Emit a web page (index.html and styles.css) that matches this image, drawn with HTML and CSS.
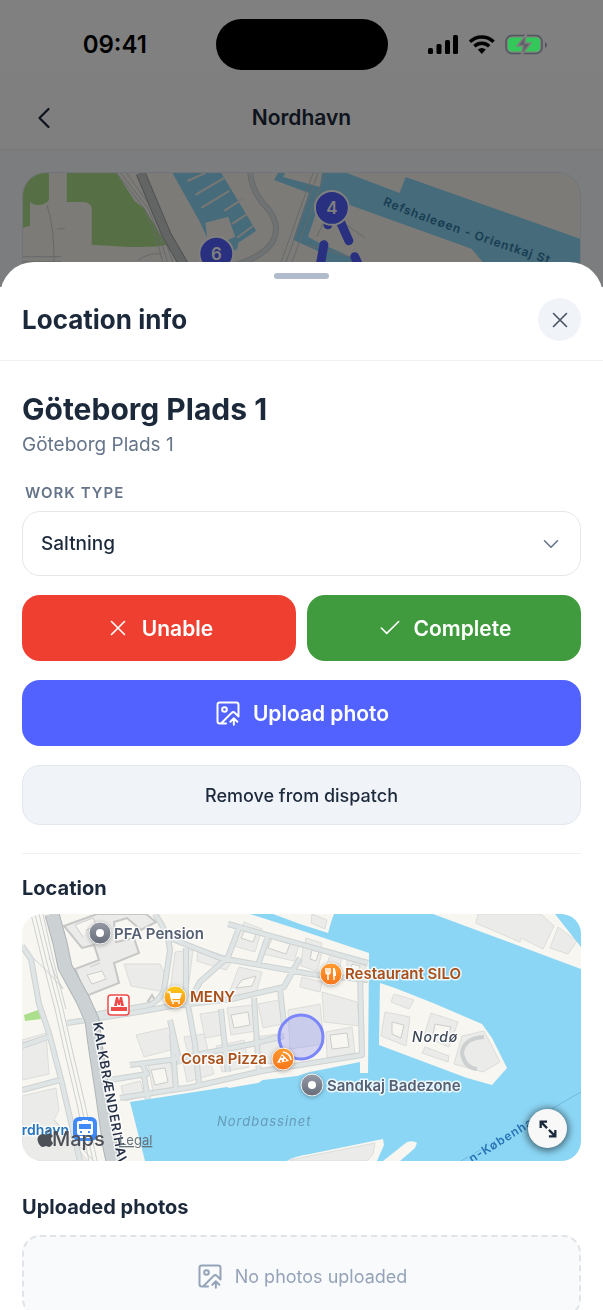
FILE: index.html
```html
<!DOCTYPE html>
<html lang="en">

<head>
    <meta charset="UTF-8">
    <title>Nordhavn</title>
    <meta name="viewport" content="width=device-width, initial-scale=1">
    <link rel="stylesheet" href="styles.css">
</head>

<body>
    <!-- icons shared by several controls -->
    <svg class="sprite" aria-hidden="true">
        <symbol id="icon-x" viewBox="0 0 24 24">
            <path d="M18 6 6 18M6 6l12 12" />
        </symbol>
        <symbol id="icon-photo" viewBox="0 0 24 24">
            <path d="M10.3 21H5a2 2 0 0 1-2-2V5a2 2 0 0 1 2-2h14a2 2 0 0 1 2 2v10l-3.1-3.1a2 2 0 0 0-2.8 0L6 21" />
            <path d="m14 19.5 3-3 3 3M17 22v-5.5" />
            <circle cx="9" cy="9" r="2" />
        </symbol>
    </svg>

    <div class="app">
        <div class="status-bar">
            <span class="time">09:41</span>
            <span class="island"></span>
            <svg class="status-icons" viewBox="0 0 120 22" width="120" height="22">
                <rect x="0" y="14" width="5" height="6" rx="1.5" />
                <rect x="8.5" y="10" width="5" height="10" rx="1.5" />
                <rect x="17" y="6" width="5" height="14" rx="1.5" />
                <rect x="25" y="1" width="5" height="19" rx="1.5" />
                <g class="wifi">
                    <path d="M42 7.8a17 17 0 0 1 23.6 0" />
                    <path d="M46.4 12.2a10.7 10.7 0 0 1 14.8 0" />
                </g>
                <path d="M49.8 15.5a5.8 5.8 0 0 1 8 0L53.800 20Z" />
                <rect class="battery-frame" x="78" y="1.5" width="36" height="18" rx="6" />
                <path class="battery-tip" d="M117 8q2 1 2 3t-2 3Z" />
                <rect class="battery-level" x="80" y="3.5" width="32" height="14" rx="4" />
                <path class="battery-bolt" d="M98.5 0 89 12h6L93 22l10-13h-6Z" />
            </svg>
        </div>

        <header class="nav-bar">
            <button class="back" type="button" aria-label="Back">
                <svg class="icon icon-lg" viewBox="0 0 24 24"><path d="m15 18-6-6 6-6" /></svg>
            </button>
            <h1>Nordhavn</h1>
        </header>

        <main class="route">
            <svg class="map route-map" viewBox="0 0 559 247" preserveAspectRatio="xMidYMin slice">
                <rect class="land" width="559" height="247" />
                <path class="park" d="M0 0H26V27Q22 33 12 32L7 29V53L0 55ZM44 0H94L112 28 122 36Q132 52 144 72Q135 75 102 74L69 72V35Q67 29 60 29H44Z" />
                <g class="water">
                    <path d="M150 0H199L234 58 216 70 215 76 208 80V110H186V68L178 50Z" />
                    <path d="M256 0 252 7 287 20 271 67 300 80V90H330L335 87 295 69 286 64 300 22 450 76 462 90H559V66L384 4 378 20 325 0H300L298 14 261 4 263 0Z" />
                </g>
                <path class="land" d="M183 50 206 44 213 64 195 72 185 67Z" />
                <g class="pier">
                    <path d="m165 8 18-8M173 22l29-17M179 35l28-17M202 38l20-13M210 51l15-10M215 65l16-12" />
                </g>
                <g class="rail">
                    <path d="M94 0 122 36 134 66 143 100M98 0 126 36 138 66 148 100M104 0 131 38 142 66 154 100" />
                    <path d="M291 0 257 95M296 0 262 95M303 0 268 95M0 84H38M0 89H38M24 32Q32 55 31 95M34 56h8M115 88q10-8 24-7" />
                    <path d="M300 35 343 65M310 30 295 64M285 72l50 14" />
                </g>
                <path class="road-edge road-main" d="M118 0 144 62 166 100" />
                <path class="road-main" d="M118 0 144 62 166 100" />
                <path class="road-edge" d="M228 0Q230 20 245 35 258 50 252 66 245 82 215 92" />
                <path class="road" d="M228 0Q230 20 245 35 258 50 252 66 245 82 215 92" />
                <path class="dispatch-line" d="M306 50v2M302 72l-5 28M319 50l8 18M333 84l8 18" />
                <g class="stop">
                    <circle cx="310" cy="35" r="17" />
                    <text x="310" y="41">4</text>
                    <circle cx="194" cy="81" r="17" />
                    <text x="194" y="87">6</text>
                </g>
                <path id="ferry" class="guide" d="M361 32Q430 60 560 102" />
                <text class="ferry-label"><textPath href="#ferry">Refshaleøen - Orientkaj St</textPath></text>
            </svg>
        </main>
        <div class="dim"></div>
    </div>

    <section class="sheet" aria-labelledby="sheet-title">
        <header class="sheet-header">
            <span class="handle"></span>
            <h2 id="sheet-title">Location info</h2>
            <button class="close" type="button" aria-label="Close">
                <svg class="icon"><use href="#icon-x" /></svg>
            </button>
        </header>

        <div class="sheet-body">
            <h3 class="place">Göteborg Plads 1</h3>
            <p class="address">Göteborg Plads 1</p>

            <label class="field-label" for="workType">Work type</label>
            <div class="select">
                <select id="workType">
                    <option>Saltning</option>
                </select>
                <svg class="icon" viewBox="0 0 24 24"><path d="m6 9 6 6 6-6" /></svg>
            </div>

            <div class="actions">
                <button class="btn btn-red" type="button">
                    <svg class="icon"><use href="#icon-x" /></svg>
                    Unable
                </button>
                <button class="btn btn-green" type="button">
                    <svg class="icon" viewBox="0 0 24 24"><path d="M20 6 9 17l-5-5" /></svg>
                    Complete
                </button>
                <button class="btn btn-blue" type="button">
                    <svg class="icon icon-photo"><use href="#icon-photo" /></svg>
                    Upload photo
                </button>
                <button class="btn btn-plain" type="button">Remove from dispatch</button>
            </div>

            <hr>

            <h4>Location</h4>
            <div class="location">
                <svg class="map" viewBox="0 0 559 247" preserveAspectRatio="xMidYMid slice">
                    <defs>
                        <linearGradient id="grey-pin" x2="0" y2="1">
                            <stop stop-color="#969ba6" />
                            <stop offset="1" stop-color="#666d79" />
                        </linearGradient>
                        <linearGradient id="yellow-pin" x2="0" y2="1">
                            <stop stop-color="#fbc916" />
                            <stop offset="1" stop-color="#fb8b1e" />
                        </linearGradient>
                        <linearGradient id="orange-pin" x2="0" y2="1">
                            <stop stop-color="#ff9a2f" />
                            <stop offset="1" stop-color="#f9761a" />
                        </linearGradient>
                    </defs>

                    <rect class="land" width="559" height="247" />
                    <path class="park" d="M2 101 16 96 19 105 3 107Z" />
                    <g class="block">
                        <path d="M0 126 24 119 27 160 0 166ZM0 182 34 174 37 196 32 206 66 247H0Z" />
                        <path d="M102 50 138 50 143 60V78L109 72ZM153 38 171 36 165 83 148 78ZM176 33 212 45 204 56 175 47Z" />
                        <path d="M222 8 240 15 233 38 212 32ZM247 20 278 28 272 47 241 40ZM217 53 240 58 234 80 205 84ZM284 24 300 29 295 54 279 48Z" />
                        <path d="M205 94 230 91 234 117 209 121ZM236 90 257 86 261 110 241 114ZM178 100 198 97 201 121 183 124Z" />
                        <path d="M114 121 150 113 156 134 122 143ZM162 123 182 120 188 144 168 148ZM194 132 222 126 227 153 200 158ZM232 123 257 120 259 148 235 151Z" />
                        <path d="M99 172 118 167 123 182 103 187ZM126 150 148 146 153 174 131 178ZM161 148 187 143 192 160 165 168Z" />
                        <path d="M300 78 335 88 338 112 302 108ZM304 118 330 113 333 139 305 144ZM266 96 298 90 302 130 268 135Z" />
                        <path d="M281 33 300 38 295 57 279 52ZM309 38 320 41 316 63 302 59ZM325 46 344 52 342 67 325 62Z" />
                        <path d="M280 63 300 68 298 78 278 73ZM290 0 305 6 303 15 289 9Z" />
                        <path d="M456 0H519L532 12 521 35 499 24 498 28 454 9ZM536 13 555 27 546 40 528 34Z" />
                        <path d="M268 246 353 229 351 240 345 247H268Z" />
                    </g>
                    <g class="house">
                        <path d="M42 12 75 0H124L134 8 119 16 105 4 92 8 94 28 112 24 117 39 92 49 97 69 64 82 53 55 77 46 72 31 60 34Z" />
                        <path d="M126 87 130 81 133 86 128 89Z" />
                    </g>
                    <g class="yard">
                        <path d="M61 23 53 11 71 4 75 12 64 16M65 61 80 57 84 65 70 70ZM78 49 68 53M224 14 235 18 231 28 219 24ZM250 24 268 30 264 40 246 34Z" />
                        <path d="M220 66 234 62 230 72 214 74ZM209 101 226 98 228 111 212 114ZM129 156 143 154 146 168 133 171ZM308 121 325 119 327 133 310 135ZM290 36 297 38 294 47 288 45ZM330 50 338 52 336 60 328 58Z" />
                    </g>
                    <g class="rail">
                        <path d="M9 0 20 45 33 95 42 135 55 190 67 247M13 0 24 45 37 95 46 135 59 190 71 247M17 0 28 45 41 95 50 135 63 190 75 247M21 0 31 45 44 95" />
                        <path d="M0 35Q20 50 41 75M27 43Q31 60 41 75M32 206 72 247" />
                    </g>
                    <path class="road-edge" d="M0 32 9 45 17 90 27 119 39 165 58 247M0 132 26 123M0 176 38 166M45 109 110 99 150 92 210 85 262 73 278 44M133 0Q147 20 148 36L142 76Q138 86 128 91L60 103M148 24 198 44 288 60 346 66M164 34V80L173 130 177 170M206 10 346 49M217 14 206 43 178 68 166 90M246 22 236 51M199 95 202 125 206 158M232 84 237 160M258 75 262 110M108 151 148 146 230 130 262 122M75 168 125 160 120 150M122 162 126 186M150 120 154 176M98 184 170 173 240 157 340 141 338 60M148 106 158 150" />
                    <path class="road" d="M0 32 9 45 17 90 27 119 39 165 58 247M0 132 26 123M0 176 38 166M45 109 110 99 150 92 210 85 262 73 278 44M133 0Q147 20 148 36L142 76Q138 86 128 91L60 103M148 24 198 44 288 60 346 66M164 34V80L173 130 177 170M206 10 346 49M217 14 206 43 178 68 166 90M246 22 236 51M199 95 202 125 206 158M232 84 237 160M258 75 262 110M108 151 148 146 230 130 262 122M75 168 125 160 120 150M122 162 126 186M150 120 154 176M98 184 170 173 240 157 340 141 338 60M148 106 158 150" />
                    <path class="road-edge road-wide" d="M30 0 38 29 43 53 61 86 70 106 73 130 81 183 88 233 91 247" />
                    <path class="road road-wide" d="M30 0 38 29 43 53 61 86 70 106 73 130 81 183 88 233 91 247" />

                    <path class="water" d="M228 0 278 16 347 39 346 159H338V148L288 158 275 162 241 166 236 169 207 174 205 173 108 188 123 247H265Q270 243 288 240L361 225 362 231 355 247H361L385 228Q392 226 395 229L393 234 378 247H559V55L411 0H312L309 8 306 19 278 10 251 0ZM533 0H559V33Z" />
                    <path class="land" d="M358 69 373 74 411 89 460 110 470 124 485 154 470 171 445 164 357 131Z" />
                    <g class="block">
                        <path d="M372 80 392 86 387 95 369 88ZM363 98 388 103 384 132 359 122ZM409 99 436 108 427 133 402 122ZM403 133 427 142 426 148 400 139Z" />
                        <path d="M440 122 462 117 478 148 461 158 432 150Z" />
                    </g>
                    <g class="yard">
                        <path d="M370 108 382 111 379 124 370 120ZM413 110 429 113 425 122 411 121Z" />
                    </g>
                    <path class="arch" d="M462 123Q441 124 440 140 443 154 455 155" />
                    <path class="ferry-line" d="M439 247 559 178" />

                    <circle class="area" cx="279" cy="123" r="22" />

                    <path id="kalk" class="guide" d="M71 109Q79 160 104 290" />
                    <text class="street"><textPath href="#kalk">KALKBRÆNDERIHAVN</textPath></text>
                    <text class="island-name" x="390" y="128">Nordø</text>
                    <text class="basin" x="195" y="212">Nordbassinet</text>
                    <path id="route" class="guide" d="M450 249 560 181" />
                    <text class="route-label"><textPath href="#route">n-København</textPath></text>

                    <g class="pin">
                        <circle cx="78" cy="19" r="11" fill="url(#grey-pin)" />
                        <circle cx="290" cy="171" r="11" fill="url(#grey-pin)" />
                        <circle cx="153" cy="83" r="11" fill="url(#yellow-pin)" />
                        <circle cx="309" cy="60" r="11" fill="url(#orange-pin)" />
                        <circle cx="261" cy="145" r="11" fill="url(#orange-pin)" />
                    </g>
                    <g class="glyph">
                        <circle cx="78" cy="19" r="4" />
                        <circle cx="290" cy="171" r="4" />
                        <path d="M148 79h12l-2 6h-9Z" />
                        <path class="thin" d="M145 78h3l2 9h8" />
                        <circle cx="151" cy="89" r="1" />
                        <circle cx="157" cy="89" r="1" />
                        <path class="thin" d="M304 54v4q0 2 2 2t2-2v-4M306 54v12M312 66V54" />
                        <path d="M311 54q3 0 3 8h-3Z" />
                        <path d="m255 149 5-9 7 7Z" />
                        <path class="thin" d="M261 138q7 1 8 8" />
                    </g>
                    <g class="dots">
                        <circle cx="260" cy="143" r="1" />
                        <circle cx="263" cy="146" r="1" />
                        <circle cx="259" cy="147" r="1" />
                    </g>

                    <g class="metro">
                        <rect x="86" y="81" width="21" height="20" rx="3" />
                        <path d="M89 93h16v4H89ZM92 92l2-9h2l1 4 1-4h2l2 9h-3v-4l-1 3h-2l-1-3v4Z" />
                    </g>
                    <g class="poi">
                        <text x="92" y="25">PFA Pension</text>
                        <text x="305" y="177">Sandkaj Badezone</text>
                    </g>
                    <g class="poi poi-food">
                        <text x="168" y="88">MENY</text>
                        <text x="323" y="65">Restaurant SILO</text>
                        <text x="159" y="150">Corsa Pizza</text>
                    </g>

                    <text class="station" x="47" y="221">Nordhavn</text>
                    <g class="train">
                        <rect x="51" y="203" width="24" height="24" rx="6" />
                        <path d="M60 206h6v1h3q2 0 2 2v10q0 2-2 2H57q-2 0-2-2v-10q0-2 2-2h3ZM57 210v5h12v-5ZM58 217v2h2v-2ZM66 217v2h2v-2ZM58 222h10l2 2H56Z" />
                    </g>
                    <path class="apple" d="M25 219q0-3 3-4 0 3-3 4ZM22 220q2 1 4 0 3-1 5 2-4 3 0 7-2 4-4 4l-3-1-3 1q-3 0-5-5-2-8 6-8Z" />
                    <text class="maps" x="30" y="232">Maps</text>
                    <a href="#legal"><text class="legal" x="97" y="231">Legal</text></a>
                </svg>
                <button class="expand" type="button" aria-label="Expand map">
                    <svg viewBox="0 0 24 24"><path d="M4 11V4h7M4 4l7 7M20 13v7h-7M20 20l-7-7" /></svg>
                </button>
            </div>

            <h4>Uploaded photos</h4>
            <div class="empty">
                <svg class="icon icon-photo"><use href="#icon-photo" /></svg>
                No photos uploaded
            </div>
        </div>
    </section>
</body>

</html>
```
FILE: styles.css
```css
* {
    box-sizing: border-box;
}

body {
    margin: 0;
    height: 100vh;
    overflow: hidden;
    font-family: Inter, "Liberation Sans", sans-serif;
    color: #1c293b;
    background-color: white;
}

h1,
h2,
h3,
h4,
p {
    margin: 0;
}

button,
select {
    font: inherit;
    color: inherit;
    cursor: pointer;
}

.sprite {
    display: none;
}

.icon {
    width: 26px;
    height: 26px;
    flex: none;
    fill: none;
    stroke: currentColor;
    stroke-width: 1.5;
    stroke-linecap: round;
    stroke-linejoin: round;
}

.icon-photo {
    width: 28px;
    height: 28px;
    stroke-width: 1.7;
}

.icon-lg {
    width: 36px;
    height: 36px;
}

/* screen behind the sheet */

.app {
    position: relative;
    height: calc(20vh + 25px);
    overflow: hidden;
    background-color: #f8fafc;
}

.dim {
    position: absolute;
    inset: 0;
    background-color: rgba(0, 0, 0, 0.5);
}

/* above the dim layer, so it carries the dimmed colour itself */
.status-bar {
    position: relative;
    z-index: 1;
    display: grid;
    grid-template-columns: 1fr 172px 1fr;
    align-items: center;
    justify-items: center;
    padding: 19px 14px 0;
    color: black;
    background-color: #808080;
}

.time {
    font-size: 24px;
    font-weight: 600;
}

.island {
    width: 172px;
    height: 51px;
    border-radius: 26px;
    background-color: black;
}

.wifi {
    fill: none;
    stroke: black;
    stroke-width: 3.4;
}

.battery-frame {
    fill: none;
    stroke: #50545c;
    stroke-width: 1.5;
}

.battery-tip {
    fill: #50545c;
}

.battery-level {
    fill: #34c759;
}

.battery-bolt {
    fill: #606468;
    stroke: #808080;
    stroke-width: 1.5;
}

.nav-bar {
    display: grid;
    grid-template-columns: 48px 1fr 48px;
    align-items: center;
    height: 80px;
    padding: 16px 20px 0;
    border-bottom: 1px solid #f1f2f4;
    background-color: white;
}

.nav-bar h1 {
    font-size: 21px;
    font-weight: 600;
    text-align: center;
}

.back {
    display: flex;
    justify-content: center;
    padding: 0;
    border: 0;
    background: none;
}

.route {
    padding: 22px;
}

/* maps */

.map {
    display: block;
    width: 100%;
    height: 247px;
    border-radius: 20px;
}

.route-map {
    border-radius: 24px;
    border: 1px solid #e2e8f0;
}

.land {
    fill: #f8f6f0;
}

.park {
    fill: #acdf8b;
}

.water {
    fill: #8cd6f5;
}

.block {
    fill: #ebebe9;
    stroke: #dcddda;
}

.house {
    fill: #ebebe9;
    stroke: #c6c7c6;
    stroke-width: 2;
}

.yard {
    fill: #f8f6f0;
    stroke: #cccdcb;
}

.rail {
    fill: none;
    stroke: #cdd0d1;
}

.pier {
    fill: none;
    stroke: #f0eee8;
    stroke-width: 2;
}

.road,
.road-edge,
.road-main {
    fill: none;
    stroke: #dfe4e5;
    stroke-width: 4;
    stroke-linejoin: round;
}

.road-edge {
    stroke: #cdd2d3;
    stroke-width: 6;
}

.road-main {
    stroke: #c6c8c8;
    stroke-width: 8;
}

.road-edge.road-main {
    stroke: #a0a2a2;
    stroke-width: 10;
}

.road-wide {
    stroke: #ccd2d4;
    stroke-width: 13;
}

.road-edge.road-wide {
    stroke: #afb4b6;
    stroke-width: 15;
}

.arch {
    fill: none;
    stroke: #ccd0d0;
    stroke-width: 4;
}

.guide {
    fill: none;
}

.dispatch-line {
    fill: none;
    stroke: #5060ff;
    stroke-width: 9;
    stroke-linecap: round;
}

.stop circle {
    fill: #5060ff;
    stroke: white;
    stroke-width: 2;
}

.stop text {
    fill: white;
    font-size: 17px;
    font-weight: 600;
    text-anchor: middle;
}

.ferry-label {
    fill: #2f79a5;
    font-size: 12px;
    font-weight: 600;
    letter-spacing: 1px;
}

.ferry-line {
    stroke: #6fb9e2;
}

.area {
    fill: rgba(120, 125, 245, 0.28);
    stroke: #7b86fb;
    stroke-width: 3;
}

.street,
.island-name,
.poi,
.station,
.route-label {
    paint-order: stroke;
    stroke: rgba(255, 255, 255, 0.8);
    stroke-width: 3;
    stroke-linejoin: round;
}

.street {
    fill: #273247;
    font-size: 13px;
    font-weight: 600;
    letter-spacing: 1px;
}

.island-name {
    fill: #3c4656;
    font-size: 14px;
    font-weight: 500;
    font-style: italic;
    letter-spacing: 1px;
}

.basin {
    fill: #659bb7;
    font-size: 13px;
    font-style: italic;
    letter-spacing: 1px;
}

.route-label {
    fill: #2674b5;
    stroke: #8cd6f5;
    font-size: 12px;
    font-weight: 600;
    letter-spacing: 1px;
}

.pin {
    stroke: #f3f4f4;
    filter: drop-shadow(0 1px 2px rgba(0, 0, 0, 0.3));
}

.glyph {
    fill: white;
}

.thin {
    fill: none;
    stroke: white;
    stroke-width: 1.5;
}

.dots {
    fill: #f9761a;
}

.metro rect {
    fill: white;
    stroke: #f04a48;
    stroke-width: 1.5;
}

.metro path {
    fill: #f04a48;
}

.poi {
    fill: #566074;
    font-size: 15px;
    font-weight: 600;
}

.poi-food {
    fill: #a9501b;
}

.station {
    fill: #2575bd;
    font-size: 14px;
    font-weight: 600;
    text-anchor: end;
}

.train rect {
    fill: #3f8af7;
}

.train path {
    fill: white;
    fill-rule: evenodd;
}

.apple,
.maps,
.legal {
    fill: #4c5057;
}

.maps {
    font-size: 20px;
    font-weight: 500;
}

.legal {
    fill: #64727b;
    font-size: 13px;
    text-decoration: underline;
}

/* sheet */

.sheet {
    position: fixed;
    inset: auto 0 0;
    display: flex;
    flex-direction: column;
    height: 80vh;
    border-radius: 34px 34px 0 0;
    background-color: white;
    overflow: hidden;
}

.sheet-header {
    display: grid;
    grid-template-columns: 1fr auto;
    align-items: center;
    padding: 11px 22px 19px;
    row-gap: 19px;
    border-bottom: 1px solid #eef0f3;
}

.handle {
    grid-column: 1 / -1;
    justify-self: center;
    width: 55px;
    height: 6px;
    border-radius: 3px;
    background-color: #b0bccb;
}

.sheet-header h2 {
    font-size: 26px;
    line-height: 32px;
    font-weight: 700;
}

.close {
    display: grid;
    place-items: center;
    width: 43px;
    height: 43px;
    padding: 0;
    border: 0;
    border-radius: 50%;
    color: #475366;
    background-color: #f0f3f8;
}

.sheet-body {
    flex: 1;
    padding: 28px 22px;
    overflow-y: auto;
    scrollbar-width: none;
}

.place {
    font-size: 30px;
    line-height: 40px;
    font-weight: 700;
}

.address {
    margin-top: 4px;
    font-size: 19px;
    line-height: 24px;
    color: #66758a;
}

.field-label {
    display: block;
    margin: 26px 3px 8px;
    font-size: 15px;
    line-height: 20px;
    font-weight: 600;
    letter-spacing: 1px;
    text-transform: uppercase;
    color: #66758a;
}

.select {
    display: grid;
    align-items: center;
}

.select select,
.select .icon {
    grid-area: 1 / 1;
}

.select select {
    appearance: none;
    width: 100%;
    height: 65px;
    padding: 0 18px;
    border: 1px solid #e4e6ea;
    border-radius: 18px;
    background-color: white;
    font-size: 19px;
    font-weight: 500;
}

.select .icon {
    justify-self: end;
    margin-right: 17px;
    color: #66758a;
    pointer-events: none;
}

.actions {
    display: grid;
    grid-template-columns: 1fr 1fr;
    gap: 19px 11px;
    margin-top: 19px;
}

.btn {
    display: flex;
    align-items: center;
    justify-content: center;
    gap: 11px;
    height: 66px;
    padding: 0;
    border: 0;
    border-radius: 18px;
    color: white;
    font-size: 21px;
    font-weight: 600;
}

.btn-red {
    background-color: #ee3f30;
}

.btn-green {
    background-color: #409a3e;
}

.btn-blue {
    grid-column: 1 / -1;
    background-color: #5162ff;
}

.btn-plain {
    grid-column: 1 / -1;
    height: 60px;
    border: 1px solid #e2e7ee;
    background-color: #f0f3f8;
    color: #1c293b;
    font-size: 18px;
    font-weight: 500;
}

hr {
    margin: 28px 0 20px;
    border: 0;
    border-top: 1px solid #eef0f3;
}

h4 {
    font-size: 20px;
    line-height: 28px;
    font-weight: 700;
}

.location {
    position: relative;
    margin: 12px 0 32px;
}

/* floats over the map corner */
.expand {
    position: absolute;
    right: 14px;
    bottom: 13px;
    display: grid;
    place-items: center;
    width: 39px;
    height: 39px;
    padding: 0;
    border: 0;
    border-radius: 50%;
    background-color: #f8f8f8;
    box-shadow: 0 1px 7px 2px rgba(0, 0, 0, 0.5);
}

.expand svg {
    width: 22px;
    height: 22px;
    fill: none;
    stroke: #1c293b;
    stroke-width: 2.5;
}

.empty {
    display: flex;
    align-items: center;
    justify-content: center;
    gap: 11px;
    height: 82px;
    margin-top: 14px;
    border: 2px dashed #e0e4e8;
    border-radius: 18px;
    background-color: #f9fafc;
    color: #94a3b8;
    font-size: 18px;
}
```
